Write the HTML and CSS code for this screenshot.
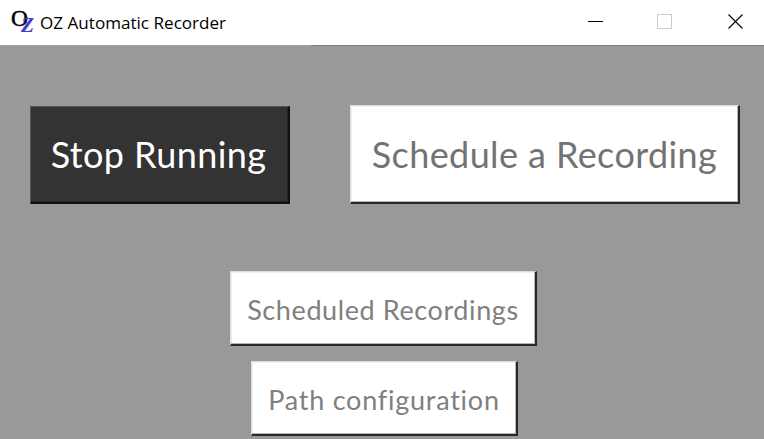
FILE: index.html
```html
<!DOCTYPE html>
<html lang="en">
<head>
<meta charset="utf-8">
<title>OZ Automatic Recorder</title>
<link rel="stylesheet" href="styles.css">
</head>
<body>
<header class="titlebar">
  <svg class="logo" width="24" height="30" viewBox="0 -4 24 30" aria-hidden="true">
    <text class="logo-o" x="0" y="16.500" textLength="17" lengthAdjust="spacingAndGlyphs">O</text>
    <text class="logo-z" x="10" y="22.500" textLength="13" lengthAdjust="spacingAndGlyphs">Z</text>
  </svg>
  <h1 class="title">OZ Automatic Recorder</h1>
  <svg class="controls" width="156" height="16" viewBox="0 0 156 16" fill="none">
    <path d="M0 7.500H15" stroke="#000"/>
    <rect x="69.500" y=".5" width="14" height="14" stroke="#ccc"/>
    <path d="M140.500 .5L154.500 14.500M154.500 .5L140.500 14.500" stroke="#000" stroke-width="1.100"/>
  </svg>
</header>
<main class="content">
  <div class="row">
    <button class="button dark stop"><span class="label">Stop Running</span></button>
    <button class="button schedule"><span class="label">Schedule a Recording</span></button>
  </div>
  <div class="stack">
    <button class="button small scheduled"><span class="label">Scheduled Recordings</span></button>
    <button class="button small path"><span class="label">Path configuration</span></button>
  </div>
</main>
</body>
</html>
```
FILE: styles.css
```css
* { box-sizing: border-box; }
body {
  margin: 0;
  height: 439px;
  overflow: hidden;
  background: #999;
}
.titlebar {
  display: flex;
  align-items: flex-start;
  height: 45px;
  padding-left: 11px;
  background: #fff;
}
.logo {
  margin-top: 5px;
  overflow: visible;
  font-family: "Liberation Serif", serif;
}
.logo-o { font-size: 24px; fill: #000; stroke: #000; stroke-width: .5px; }
.logo-z { font-size: 22px; font-style: italic; font-weight: 700; fill: #4040d0; }
.title {
  width: 548px;
  margin: 10px 0 0 5px;
  font: 400 17px/25px "Open Sans", sans-serif;
  color: #000;
  white-space: nowrap;
  transform: scaleX(1.005);
  transform-origin: left;
}
.controls { margin-top: 14px; }
.content {
  height: 394px;
  border-top: 1px solid;
  border-image: linear-gradient(90deg, #a3a3a3 311px, #808080 311px) 1;
}
.row {
  display: flex;
  align-items: flex-end;
  gap: 60px;
  padding: 59px 0 0 30px;
}
.stack {
  display: flex;
  flex-direction: column;
  align-items: flex-start;
  gap: 15px;
  padding: 67px 0 0 230px;
}
.button {
  display: flex;
  align-items: center;
  justify-content: center;
  height: 99px;
  padding: 0;
  border: 1px solid;
  border-width: 1px 2px 2px 1px;
  border-color: #ddd #292929 #292929 #ddd;
  border-radius: 0;
  background: #fff;
  color: #737373;
  font: 400 36px/42px Lato, sans-serif;
  font-variant-ligatures: none;
  letter-spacing: .4px;
  white-space: nowrap;
  box-shadow: inset -1px -1px #b5b5b5, inset 1px 1px #f0f0f0;
}
.dark {
  height: 98px;
  padding: 0 2px 1px 0;
  border-color: #555 #111 #111 #555;
  background: #333;
  color: #fff;
  box-shadow: inset -1px -1px #222;
}
.stop { width: 260px; }
.schedule { width: 390px; }
.small {
  height: 75px;
  padding-top: 3px;
  font-size: 27px;
  line-height: 32px;
  letter-spacing: .6px;
  color: #808080;
}
.scheduled { width: 307px; }
.path { width: 267px; margin-left: 21px; letter-spacing: .75px; }
```
